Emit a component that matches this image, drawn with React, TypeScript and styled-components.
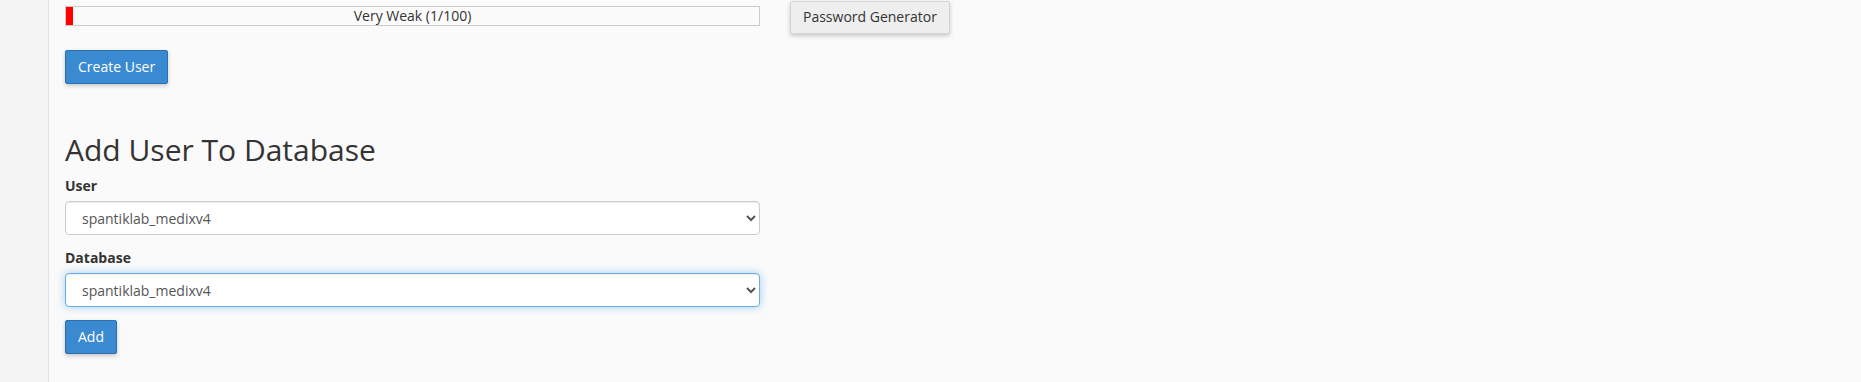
import React from "react";
import styled, { createGlobalStyle } from "styled-components";

const GlobalStyle = createGlobalStyle`
  html, body {
    margin: 0;
    padding: 0;
    background: #fafafa;
    font-family: "Open Sans", "Liberation Sans", Arial, sans-serif;
    font-size: 14px;
    color: #333;
  }
  * { box-sizing: border-box; }
`;

const Page = styled.div`
  display: flex;
  min-height: 382px;
  height: 382px;
  overflow: hidden;
`;

const Sidebar = styled.aside`
  flex: 0 0 49px;
  background: #f3f3f3;
  border-right: 1px solid #e2e2e2;
  box-shadow: 1px 0 3px rgba(0, 0, 0, 0.1);
`;

const Main = styled.main`
  flex: 1;
  padding-left: 16px;
  background: #fafafa;
`;

const TopRow = styled.div`
  display: grid;
  grid-template-columns: 695px auto;
  column-gap: 30px;
  align-items: start;
`;

const Strength = styled.div`
  position: relative;
  margin-top: 6px;
  height: 20px;
  border: 1px solid #cccccc;
  background: #fbfbfb;
  display: flex;
  align-items: center;
  justify-content: center;
`;

const StrengthFill = styled.div`
  position: absolute;
  left: 0;
  top: 0;
  bottom: 0;
  background: #ff0000;
`;

const StrengthText = styled.span`
  position: relative;
  font-size: 14px;
  line-height: 18px;
  color: #333;
`;

const Button = styled.button<{ $variant?: "primary" | "default" }>`
  display: inline-block;
  height: 34px;
  padding: 6px 12px;
  font-family: inherit;
  font-size: 14px;
  line-height: 20px;
  border-radius: 2px;
  cursor: pointer;
  white-space: nowrap;
  border: 1px solid ${(p) => (p.$variant === "primary" ? "#2c6fb0" : "#d4d4d4")};
  background: ${(p) => (p.$variant === "primary" ? "#3a8ad2" : "#eeeeee")};
  color: ${(p) => (p.$variant === "primary" ? "#ffffff" : "#333333")};
  box-shadow: 0 2px 4px rgba(0, 0, 0, 0.2);
`;

const GenButton = styled(Button)`
  justify-self: start;
  margin-top: 1px;
  height: 33px;
  padding-top: 5px;
`;

const CreateRow = styled.div`
  margin-top: 16px;
`;

const Heading = styled.h2`
  margin: 49px 0 10px;
  font-size: 30px;
  line-height: 33px;
  font-weight: 400;
  color: #333;
`;

const Form = styled.div`
  width: 695px;
`;

const FormGroup = styled.div`
  margin-bottom: 13px;
`;

const Label = styled.label`
  display: block;
  font-weight: 700;
  font-size: 14px;
  line-height: 20px;
  margin-bottom: 5px;
  color: #333;
`;

const Select = styled.select<{ $focused?: boolean }>`
  display: block;
  width: 100%;
  height: 34px;
  padding: 6px 12px;
  font-family: inherit;
  font-size: 14px;
  line-height: 20px;
  color: #555;
  background: #fff;
  border-radius: 4px;
  border: 1px solid ${(p) => (p.$focused ? "#66afe9" : "#cccccc")};
  box-shadow: ${(p) =>
    p.$focused
      ? "inset 0 1px 1px rgba(0,0,0,.075), 0 0 8px rgba(102,175,233,.6)"
      : "inset 0 1px 1px rgba(0,0,0,.075)"};
  outline: none;
`;

export default function App() {
  return (
    <>
      <GlobalStyle />
      <Page>
        <Sidebar />
        <Main>
          <TopRow>
            <Strength>
              <StrengthFill style={{ width: "7px" }} />
              <StrengthText>Very Weak (1/100)</StrengthText>
            </Strength>
            <GenButton type="button">Password Generator</GenButton>
          </TopRow>
          <CreateRow>
            <Button $variant="primary" type="button">Create User</Button>
          </CreateRow>
          <Heading>Add User To Database</Heading>
          <Form>
            <FormGroup>
              <Label>User</Label>
              <Select defaultValue="spantiklab_medixv4">
                <option>spantiklab_medixv4</option>
              </Select>
            </FormGroup>
            <FormGroup>
              <Label>Database</Label>
              <Select $focused defaultValue="spantiklab_medixv4">
                <option>spantiklab_medixv4</option>
              </Select>
            </FormGroup>
            <Button $variant="primary" type="button">Add</Button>
          </Form>
        </Main>
      </Page>
    </>
  );
}
